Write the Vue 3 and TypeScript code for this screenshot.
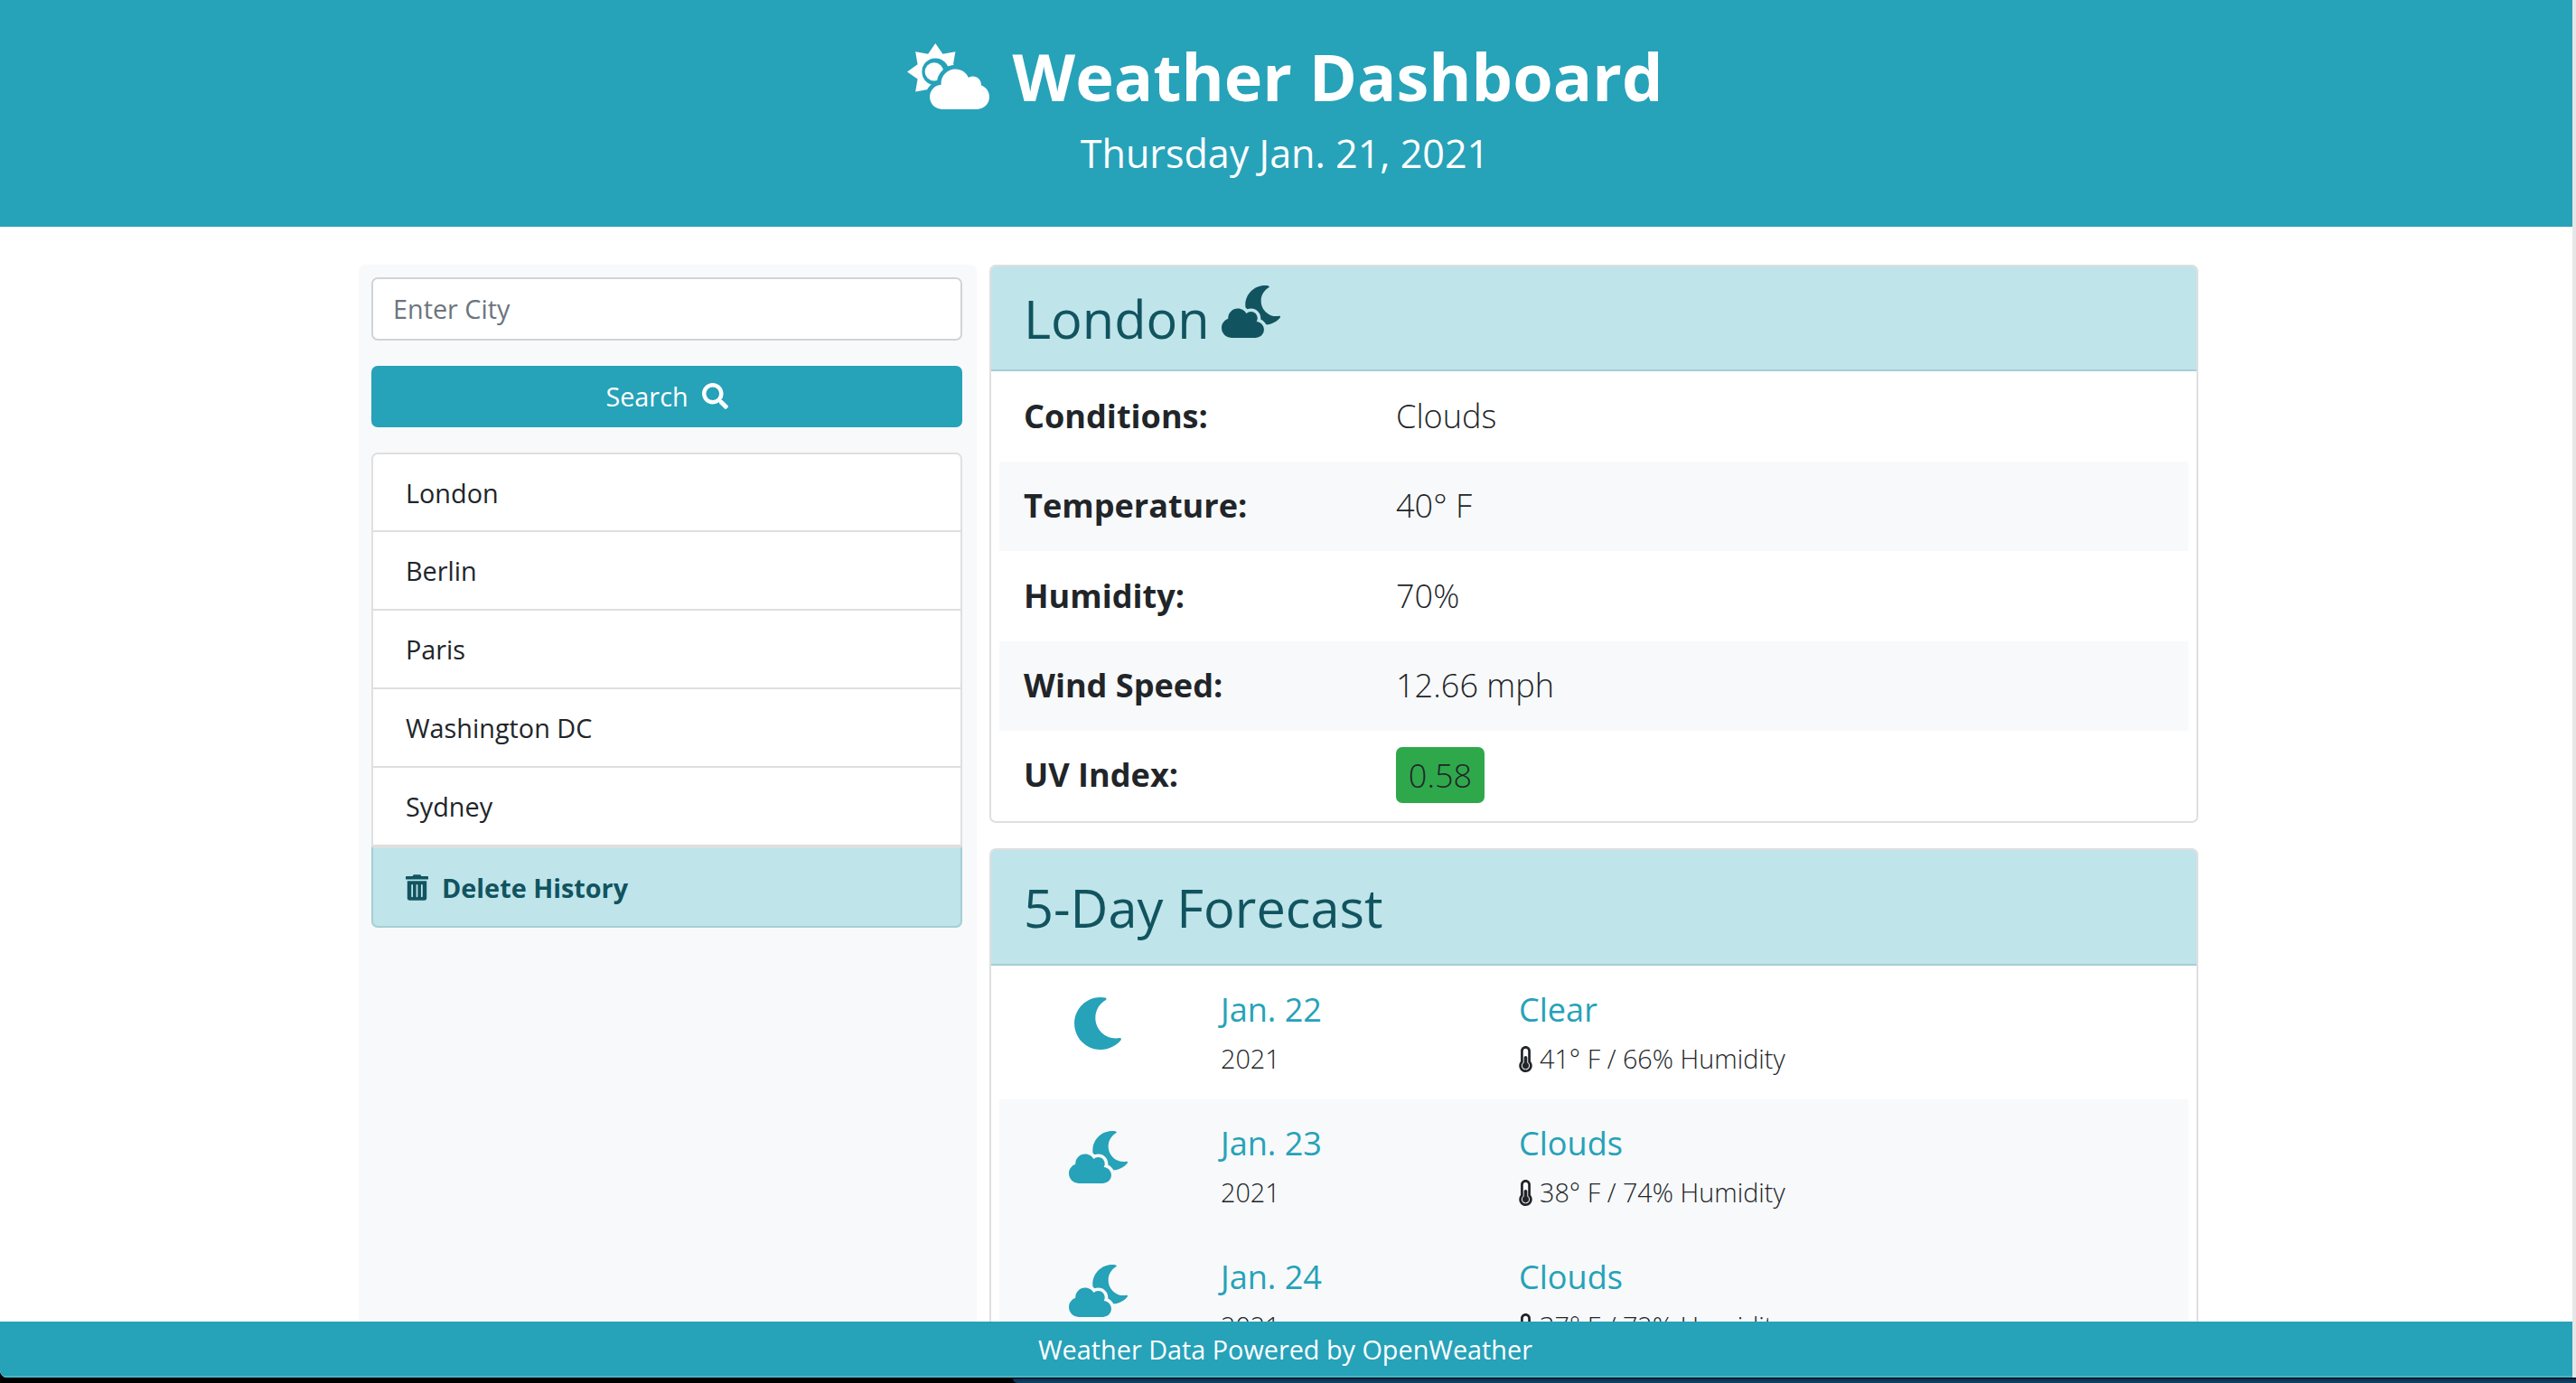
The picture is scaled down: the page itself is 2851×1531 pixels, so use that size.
<script setup lang="ts">
const cities: string[] = ['London', 'Berlin', 'Paris', 'Washington DC', 'Sydney']
const stats: { label: string; value: string }[] = [
  { label: 'Conditions:', value: 'Clouds' },
  { label: 'Temperature:', value: '40° F' },
  { label: 'Humidity:', value: '70%' },
  { label: 'Wind Speed:', value: '12.66 mph' },
]
const days = [
  { date: 'Jan. 22', year: '2021', cond: 'Clear', detail: '41° F / 66% Humidity', moon: true },
  { date: 'Jan. 23', year: '2021', cond: 'Clouds', detail: '38° F / 74% Humidity', moon: false },
  { date: 'Jan. 24', year: '2021', cond: 'Clouds', detail: '37° F / 72% Humidity', moon: false },
]
const cloudMoon =
  'M342.8 352.7c5.7-9.6 9.2-20.7 9.2-32.7 0-35.3-28.7-64-64-64-17.2 0-32.8 6.9-44.3 17.9-16.3-29.6-47.5-49.9-83.7-49.9-53 0-96 43-96 96 0 2 .5 3.8.6 5.7C27.1 338.8 0 374.1 0 416c0 53 43 96 96 96h240c44.2 0 80-35.8 80-80 0-41.9-32.3-75.8-73.2-79.3zm222.5-54.3c-93.1 17.7-178.5-53.7-178.5-147.6 0-54.2 29-104 76.1-130.8 7.3-4.1 5.4-15.1-2.8-16.7C448.4 1.1 436.7 0 425 0 319.1 0 233.1 85.9 233.1 192c0 8.5.7 16.8 1.8 25 5.9 4.3 11.6 8.9 16.7 14.2 11.4-4.7 23.7-7.2 36.4-7.2 52.9 0 96 43.1 96 96 0 3.6-.2 7.2-.6 10.7 23.6 10.8 42.4 29.5 53.5 52.6 54.4-3.4 103.7-29.3 137.1-70.4 5.3-6.5-.5-16.1-8.7-14.5z'
const moon =
  'M283.211 512c78.962 0 151.079-35.925 198.857-94.792 7.068-8.708-.639-21.43-11.562-19.35-124.203 23.654-238.262-71.576-238.262-196.954 0-72.222 38.662-138.635 101.498-174.394 9.686-5.512 7.25-20.197-3.756-22.23A258.156 258.156 0 0 0 283.211 0c-141.309 0-256 114.511-256 256 0 141.309 114.511 256 256 256z'
const thermo =
  'M192 384c0 35.346-28.654 64-64 64s-64-28.654-64-64c0-23.685 12.876-44.349 32-55.417V224c0-17.673 14.327-32 32-32s32 14.327 32 32v104.583c19.124 11.068 32 31.732 32 55.417zm32-84.653c19.912 22.563 32 52.194 32 84.653 0 70.696-57.303 128-128 128-.299 0-.609-.001-.909-.003C56.789 511.509-.357 453.636.002 383.333.166 351.135 12.225 321.755 32 299.347V96c0-53.019 42.981-96 96-96s96 42.981 96 96v203.347zM208 384c0-34.339-19.37-52.19-32-66.502V96c0-26.467-21.533-48-48-48S80 69.533 80 96v221.498c-12.732 14.428-31.825 32.1-31.999 66.08-.224 43.876 35.563 80.116 79.423 80.42L128 464c44.112 0 80-35.888 80-80z'
</script>

<template>
  <div class="screen">
    <div class="window">
      <header class="top">
        <h1 class="title">
          <svg class="sun-icon" viewBox="0 0 640 512" aria-hidden="true">
            <path fill-rule="evenodd" fill="#fff" d="M220 0L277.4 81.4L375.6 64.4L358.6 162.6L440 220L358.6 277.4L375.6 375.6L277.4 358.6L220 440L162.6 358.6L64.4 375.6L81.4 277.4L0 220L81.4 162.6L64.4 64.4L162.6 81.4ZM325 220A105 105 0 1 0 115 220A105 105 0 1 0 325 220Z" />
            <circle cx="210" cy="220" r="72" fill="#fff" />
            <path fill="#fff" stroke="#26a2b9" stroke-width="66" paint-order="stroke" d="M575.2 325.7c.2-1.9.8-3.7.8-5.6 0-35.3-28.7-64-64-64-12.6 0-24.2 3.8-34.1 10-17.6-38.8-56.5-66-101.9-66-61.8 0-112 50.1-112 112 0 3 .7 5.8.9 8.7-49.6 3.7-88.9 44.7-88.9 95.3 0 53 43 96 96 96h272c53 0 96-43 96-96 0-42.9-28.2-78.8-66.8-91.1z" />
          </svg>
          <span>Weather Dashboard</span>
        </h1>
        <p class="date">Thursday Jan. 21, 2021</p>
      </header>

      <main class="main">
        <aside class="side">
          <input class="city" type="text" placeholder="Enter City" />
          <button class="search" type="button">
            <span>Search</span>
            <svg class="search-icon" viewBox="0 0 512 512" aria-hidden="true"><path fill="currentColor" d="M505 442.7L405.3 343c-4.5-4.5-10.6-7-17-7H372c27.6-35.3 44-79.7 44-128C416 93.1 322.9 0 208 0S0 93.1 0 208s93.1 208 208 208c48.3 0 92.7-16.4 128-44v16.3c0 6.4 2.5 12.5 7 17l99.7 99.7c9.4 9.4 24.6 9.4 33.9 0l28.3-28.3c9.4-9.4 9.4-24.6.1-34zM208 336c-70.7 0-128-57.2-128-128 0-70.7 57.2-128 128-128 70.7 0 128 57.2 128 128 0 70.7-57.2 128-128 128z" /></svg>
          </button>
          <ul class="history">
            <li v-for="c in cities" :key="c" class="hist-item">{{ c }}</li>
            <li class="hist-item hist-delete">
              <svg class="trash" viewBox="0 0 448 512" aria-hidden="true"><path fill="currentColor" d="M32 464a48 48 0 0 0 48 48h288a48 48 0 0 0 48-48V128H32zm272-256a16 16 0 0 1 32 0v224a16 16 0 0 1-32 0zm-96 0a16 16 0 0 1 32 0v224a16 16 0 0 1-32 0zm-96 0a16 16 0 0 1 32 0v224a16 16 0 0 1-32 0zM432 32H312l-9.4-18.7A24 24 0 0 0 281.1 0H166.8a23.72 23.72 0 0 0-21.4 13.3L136 32H16A16 16 0 0 0 0 48v32a16 16 0 0 0 16 16h416a16 16 0 0 0 16-16V48a16 16 0 0 0-16-16z" /></svg>
              <span>Delete History</span>
            </li>
          </ul>
        </aside>

        <div class="content">
          <section class="card">
            <div class="card-head head-now">
              <h2 class="card-title">London</h2>
              <svg class="head-icon" viewBox="0 0 576 512" aria-hidden="true"><path fill="currentColor" :d="cloudMoon" /></svg>
            </div>
            <div class="card-body">
              <div v-for="s in stats" :key="s.label" class="stat">
                <strong class="stat-label">{{ s.label }}</strong>
                <span class="stat-value">{{ s.value }}</span>
              </div>
              <div class="stat stat-uv">
                <strong class="stat-label">UV Index:</strong>
                <span class="uv">0.58</span>
              </div>
            </div>
          </section>

          <section class="card card-forecast">
            <div class="card-head head-fc">
              <h2 class="card-title">5-Day Forecast</h2>
            </div>
            <div class="card-body">
              <div v-for="d in days" :key="d.date" class="day">
                <div class="day-icon">
                  <svg v-if="d.moon" class="ic-moon" viewBox="0 0 512 512" aria-hidden="true"><path fill="currentColor" :d="moon" /></svg>
                  <svg v-else class="ic-cloud" viewBox="0 0 576 512" aria-hidden="true"><path fill="currentColor" :d="cloudMoon" /></svg>
                </div>
                <div class="day-date">
                  <div class="accent">{{ d.date }}</div>
                  <div class="small">{{ d.year }}</div>
                </div>
                <div class="day-cond">
                  <div class="accent">{{ d.cond }}</div>
                  <div class="small detail">
                    <svg class="thermo" viewBox="0 0 256 512" aria-hidden="true"><path fill="#212529" :d="thermo" /></svg>
                    <span>{{ d.detail }}</span>
                  </div>
                </div>
              </div>
            </div>
          </section>
        </div>
      </main>

      <footer class="foot">Weather Data Powered by OpenWeather</footer>
    </div>
    <div class="strip"><span class="strip-blue"></span></div>
  </div>
</template>

<style>
html, body { margin: 0; background: #000; overflow: hidden; }
</style>

<style scoped>
.screen {
  width: 2851px;
  height: 1531px;
  display: flex;
  flex-direction: column;
  background: #000;
  font-family: "Open Sans", "Liberation Sans", sans-serif;
  color: #212529;
  font-size: 28.8px;
}
.window {
  height: 1525px;
  width: 2851px;
  box-sizing: border-box;
  border-right: 4px solid #e6e6e6;
  background: #fff;
  display: flex;
  flex-direction: column;
  border-bottom-left-radius: 8px;
  overflow: hidden;
}
.strip { height: 6px; padding: 1px 0 0 1121px; box-sizing: border-box; }
.strip-blue {
  display: block;
  height: 5px;
  background: linear-gradient(#082f4d, #0e4468);
  border-bottom-left-radius: 5px;
}
.top {
  height: 251px;
  flex: none;
  background: #26a2b9;
  color: #fff;
  text-align: center;
  box-sizing: border-box;
  padding-top: 41px;
}
.title {
  margin: 0;
  padding-right: 3px;
  display: flex;
  justify-content: center;
  align-items: center;
  gap: 26px;
  font-size: 72px;
  font-weight: 700;
  line-height: 87px;
}
.sun-icon { width: 91px; height: 73px; }
.date {
  margin: 9px 0 0;
  padding-right: 3px;
  font-size: 43.1px;
  font-weight: 400;
  line-height: 65px;
}
.main {
  flex: 1;
  min-height: 0;
  overflow: hidden;
  display: flex;
  gap: 14px;
  padding: 42px 0 0 397px;
}
.side {
  width: 684px;
  flex: none;
  box-sizing: border-box;
  padding: 14px 16px 14px 14px;
  background: #f8f9fa;
  border-radius: 7px 7px 0 0;
  display: flex;
  flex-direction: column;
}
.city {
  height: 70px;
  box-sizing: border-box;
  border: 2px solid #ced4da;
  border-radius: 7px;
  padding: 0 22px 1px;
  font: inherit;
  color: #495057;
  background: #fff;
  outline: none;
}
.city::placeholder { color: #6c757d; opacity: 1; }
.search {
  margin-top: 28px;
  height: 68px;
  border: 0;
  border-radius: 7px;
  background: #26a2b9;
  color: #fff;
  font: inherit;
  display: flex;
  align-items: center;
  justify-content: center;
  gap: 15px;
  padding: 0 0 2px;
}
.search-icon { width: 29px; height: 29px; }
.history {
  list-style: none;
  margin: 28px 0 0;
  padding: 0;
}
.hist-item {
  height: 87px;
  box-sizing: border-box;
  background: #fff;
  border: 2px solid #dfdfdf;
  border-top-width: 0;
  padding: 0 36px;
  display: flex;
  align-items: center;
}
.hist-item:first-child { height: 88px; border-top-width: 2px; border-radius: 7px 7px 0 0; }
.hist-delete {
  height: 90px;
  background: #bfe4ea;
  color: #11545f;
  font-weight: 700;
  gap: 15px;
  border-color: #a6ced5;
  border-top: 2px solid #dfdfdf;
  border-radius: 0 0 7px 7px;
}
.trash { width: 25px; height: 29px; flex: none; }
.content {
  width: 1338px;
  flex: none;
  display: flex;
  flex-direction: column;
  gap: 28px;
}
.card {
  box-sizing: border-box;
  border: 2px solid #dfdfdf;
  border-radius: 7px;
  background: #fff;
  flex: none;
  overflow: hidden;
}
.card-head {
  background: #bfe4ea;
  color: #11545f;
  border-bottom: 2px solid #a6ced5;
  padding: 0 36px;
  box-sizing: border-box;
  display: flex;
  align-items: center;
}
.head-now { height: 116px; gap: 13px; }
.head-fc { height: 128px; }
.card-title {
  margin: 2px 0 0;
  font-size: 57.7px;
  font-weight: 400;
  line-height: 70px;
}
.head-icon { width: 65px; height: 58px; margin-top: -14px; }
.card-body { padding: 0 9px; }
.stat {
  height: 99.5px;
  padding: 0 27px;
  display: flex;
  align-items: center;
  font-size: 36.1px;
}
.stat:nth-child(even) { background: #f8f9fa; }
.stat-uv { height: 100px; }
.stat-label { width: 412px; flex: none; font-weight: 700; margin-top: -2px; }
.stat-uv .stat-label { margin-top: -4px; }
.stat-value { font-weight: 300; margin-top: -2px; }
.uv {
  width: 98px;
  height: 62px;
  margin-top: -2px;
  background: #2fa84b;
  border-radius: 7px;
  display: flex;
  align-items: center;
  justify-content: center;
  font-weight: 300;
}
.day {
  height: 148px;
  display: flex;
  box-sizing: border-box;
  padding-top: 23px;
}
.day:nth-child(n + 2) { background: #f8f9fa; }
.day-icon {
  width: 245px;
  flex: none;
  display: flex;
  justify-content: center;
  padding-right: 27px;
  box-sizing: border-box;
  padding-top: 12px;
  color: #26a2b9;
}
.ic-moon, .ic-cloud { height: 58px; }
.ic-moon { width: 58px; }
.ic-cloud { width: 65px; }
.day-date { width: 333px; flex: none; margin-right: -3px; }
.accent {
  color: #26a2b9;
  font-size: 36.1px;
  line-height: 50px;
}
.small {
  font-size: 28.8px;
  font-weight: 300;
  line-height: 44px;
  margin-top: 8px;
}
.detail { display: flex; align-items: center; gap: 8px; }
.thermo { width: 15px; height: 29px; }
.foot {
  height: 62px;
  flex: none;
  padding-right: 2px;
  background: #26a2b9;
  border-bottom: 2px solid #4bb4c7;
  box-sizing: border-box;
  color: #fff;
  text-align: center;
  line-height: 61px;
}
</style>
